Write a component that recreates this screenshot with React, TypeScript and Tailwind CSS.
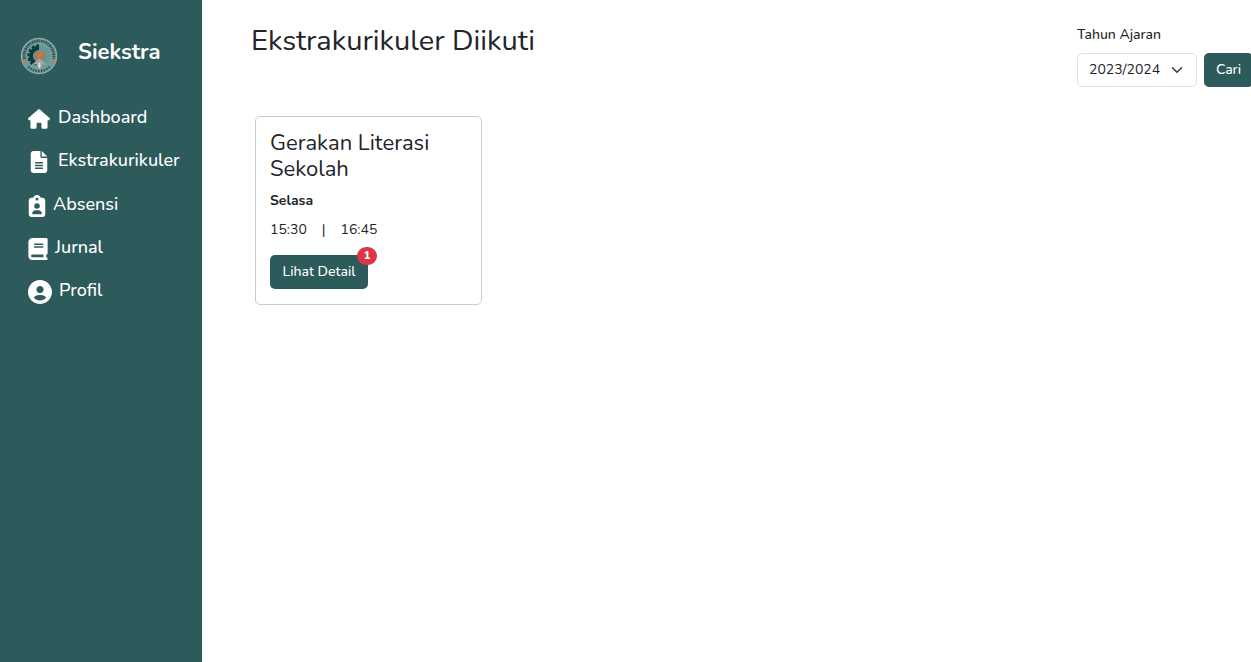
import type { ReactNode } from "react";
import { FaBook, FaClipboardUser, FaFileLines, FaHouse } from "react-icons/fa6";
import { BiSolidUserCircle } from "react-icons/bi";

type NavItem = { label: string; icon: ReactNode; gap: string };

const navItems: NavItem[] = [
  { label: "Dashboard", icon: <FaHouse className="h-5 w-[22px]" />, gap: "gap-2" },
  { label: "Ekstrakurikuler", icon: <FaFileLines className="h-[22px] w-[22px]" />, gap: "gap-2" },
  { label: "Absensi", icon: <FaClipboardUser className="h-[22px] w-[18px]" />, gap: "gap-[7px]" },
  { label: "Jurnal", icon: <FaBook className="h-[22px] w-5" />, gap: "gap-[7px]" },
  { label: "Profil", icon: <BiSolidUserCircle viewBox="2 2 20 20" className="size-6" />, gap: "gap-[7px]" },
];

function Logo() {
  return (
    <svg viewBox="0 0 50 50" className="size-[38px]" role="img" aria-label="Logo Siekstra">
      <circle cx="25" cy="25" r="24" fill="#6a9c9c" />
      <circle cx="25" cy="25" r="23.2" fill="none" stroke="#9aaaa8" strokeWidth="1.2" />
      <path d="M6 29A19.5 19.5 0 1 1 44 29" fill="none" stroke="#27393b" strokeWidth="3.6" strokeDasharray="2.4 1 1.6 1.2" opacity=".8" />
      <path d="M11 39A19.5 19.5 0 0 0 39 39" fill="none" stroke="#27393b" strokeWidth="3.2" strokeDasharray="2 1.6" opacity=".75" />
      <circle cx="25" cy="25" r="16" fill="#669898" stroke="#8fa5a3" strokeWidth=".8" />
      <path d="M25 12a13 13 0 0 0 0 26v-5a8 8 0 0 1 0-16z" fill="#083c3e" />
      <path d="M25 12.5a12.5 12.5 0 0 0-8 22" fill="none" stroke="#083c3e" strokeWidth="6" strokeDasharray="3.4 2" />
      <circle cx="26" cy="25" r="8" fill="#7f8782" />
      <path d="M25.500 28l10 8.500-6.500-.5v3.500h-7v-3.500l-6.500.5z" fill="#a9a5a0" />
      <path d="M31 18l-11.500 5.500h5l-4.500 6 12-6.500h-5z" fill="#ff6811" />
      <path d="M24.300 34h2.400v7h-2.400z" fill="#e6dfd8" />
      <circle cx="5.500" cy="33" r="1.900" fill="#ef7130" />
      <circle cx="44.500" cy="33" r="1.900" fill="#ef7130" />
    </svg>
  );
}

function Sidebar() {
  return (
    <aside className="w-[202px] shrink-0 bg-[#2d5a5a] text-white">
      <div className="flex items-center gap-5 pt-[37px] pl-5">
        <Logo />
        <span className="-mt-2 text-[22px] leading-7 font-bold">Siekstra</span>
      </div>
      <nav className="mt-[22px] pl-7">
        <ul className="flex h-[217px] flex-col">
          {navItems.map((item) => (
            <li key={item.label} className="flex-1">
              <a href="#" className={`flex h-full items-center ${item.gap}`}>
                {item.icon}
                <span className="pb-1 text-[18px] leading-6 font-medium">{item.label}</span>
              </a>
            </li>
          ))}
        </ul>
      </nav>
    </aside>
  );
}

function YearFilter() {
  return (
    <form className="-mr-0.5 pt-px text-[14px]" onSubmit={(e) => e.preventDefault()}>
      <label htmlFor="tahun" className="block leading-[22px] font-medium">
        Tahun Ajaran
      </label>
      <div className="mt-[7px] flex gap-[7px]">
        <div className="relative">
          <select
            id="tahun"
            defaultValue="2023/2024"
            className="h-[34px] w-[120px] appearance-none rounded-[5px] border border-[#dee2e6] bg-white pb-0.5 pl-[11px]"
          >
            <option>2023/2024</option>
          </select>
          <svg viewBox="0 0 16 16" className="pointer-events-none absolute top-[11px] right-3.5 size-3" aria-hidden="true">
            <path d="m2 5 6 6 6-6" fill="none" stroke="#343a40" strokeWidth="2" strokeLinecap="round" strokeLinejoin="round" />
          </svg>
        </div>
        <button type="submit" className="h-[34px] w-[49px] rounded-[5px] bg-[#2d5a5a] pb-0.5 font-medium text-white">
          Cari
        </button>
      </div>
    </form>
  );
}

function ActivityCard() {
  return (
    <article className="ml-1 w-[227px] rounded-[5px] border border-[#cbcccd] px-3.5 pt-[13px] pb-[15px]">
      <h2 className="text-[22px] leading-[26px]">Gerakan Literasi Sekolah</h2>
      <p className="mt-2 text-[14px] leading-[22px] font-bold">Selasa</p>
      <p className="mt-[7px] flex gap-[15px] text-[14px] leading-[22px]">
        <span>15:30</span>
        <span>|</span>
        <span>16:45</span>
      </p>
      <button
        type="button"
        className="relative mt-3.5 block h-[34px] w-[98px] rounded-[5px] bg-[#2d5a5a] pb-0.5 text-[14px] font-medium text-white"
      >
        Lihat Detail
        <span className="absolute -top-2 -right-[9px] flex h-[18px] w-5 items-center justify-center rounded-full bg-[#dc3545] text-[11px] font-extrabold">
          1
        </span>
      </button>
    </article>
  );
}

export default function App() {
  return (
    <div className="flex min-h-screen overflow-hidden bg-white font-['Nunito','Open_Sans',sans-serif] text-[#212529]">
      <Sidebar />
      <main className="min-w-0 flex-1 pt-[23px] pl-[49px]">
        <header className="flex items-start justify-between">
          <h1 className="text-[29px] leading-[35px]">Ekstrakurikuler Diikuti</h1>
          <YearFilter />
        </header>
        <section className="mt-[29px]">
          <ActivityCard />
        </section>
      </main>
    </div>
  );
}
